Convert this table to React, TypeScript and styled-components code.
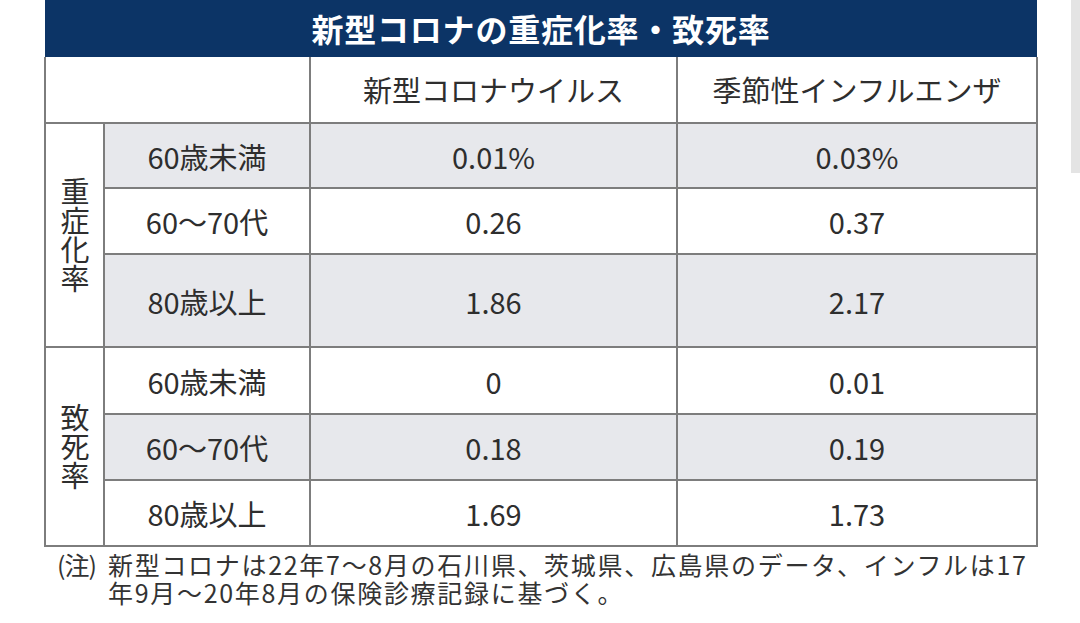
import { createGlobalStyle, styled } from 'styled-components';

const GlobalStyle = createGlobalStyle`
  body {
    margin: 0;
    background: #fff;
    font-family: "Noto Sans CJK JP", "Noto Sans", sans-serif;
    color: #2e2e2e;
  }
`;

const Page = styled.div`
  display: flex;
  align-items: flex-start;
  width: 1080px;
  height: 623px;
  overflow: hidden;
`;

const Figure = styled.div`
  margin-left: 44px;
  width: 992px;
`;

const Strip = styled.div`
  margin-left: auto;
  width: 9px;
  height: 173px;
  background: #e4e4e4;
`;

const Table = styled.table`
  width: 992px;
  border-collapse: collapse;
  table-layout: fixed;
`;

const TitleCell = styled.th`
  height: 55px;
  padding: 0 0 2px;
  background: #0c3466;
  color: #fff;
  font-size: 32px;
  font-weight: 700;
  letter-spacing: 0.8px;
  text-align: center;
  border: none;
`;

const Row = styled.tr<{ $h: number }>`
  height: ${(p) => p.$h}px;
`;

const Cell = styled.td<{ $shade?: boolean }>`
  padding: 0;
  border: 2px solid #7d7d7d;
  background: ${(p) => (p.$shade ? '#e7e8ec' : '#fff')};
  font-size: 29px;
  text-align: center;
  vertical-align: middle;
  white-space: nowrap;
`;

const HeadCell = styled(Cell)`
  border-top: none;
  padding-bottom: 2px;
`;

const GroupCell = styled(Cell)`
  writing-mode: vertical-rl;
  text-orientation: upright;
  line-height: 1;
  font-size: 29px;
`;

const Note = styled.div`
  display: flex;
  margin-top: 3px;
  padding-left: 13px;
  font-size: 25px;
  line-height: 28px;
  letter-spacing: 1.7px;
  color: #333;
  white-space: nowrap;
`;

const NoteLabel = styled.span`
  width: 51px;
  flex: none;
  letter-spacing: -1px;
`;

type DataRow = { age: string; covid: string; flu: string; shade: boolean; h: number };

const severe: DataRow[] = [
  { age: '60歳未満', covid: '0.01%', flu: '0.03%', shade: true, h: 65 },
  { age: '60～70代', covid: '0.26', flu: '0.37', shade: false, h: 66 },
  { age: '80歳以上', covid: '1.86', flu: '2.17', shade: true, h: 93 },
];

const fatal: DataRow[] = [
  { age: '60歳未満', covid: '0', flu: '0.01', shade: false, h: 67 },
  { age: '60～70代', covid: '0.18', flu: '0.19', shade: true, h: 66 },
  { age: '80歳以上', covid: '1.69', flu: '1.73', shade: false, h: 66 },
];

const Group = ({ label, rows }: { label: string; rows: DataRow[] }) => (
  <>
    {rows.map((r, i) => (
      <Row $h={r.h} key={r.age}>
        {i === 0 && <GroupCell rowSpan={rows.length}>{label}</GroupCell>}
        <Cell $shade={r.shade}>{r.age}</Cell>
        <Cell $shade={r.shade}>{r.covid}</Cell>
        <Cell $shade={r.shade}>{r.flu}</Cell>
      </Row>
    ))}
  </>
);

export default function App() {
  return (
    <>
      <GlobalStyle />
      <Page>
        <Figure>
          <Table>
            <colgroup>
              <col style={{ width: 59 }} />
              <col style={{ width: 206 }} />
              <col style={{ width: 367 }} />
              <col style={{ width: 360 }} />
            </colgroup>
            <thead>
              <tr>
                <TitleCell colSpan={4}>新型コロナの重症化率・致死率</TitleCell>
              </tr>
            </thead>
            <tbody>
              <Row $h={66}>
                <HeadCell colSpan={2} />
                <HeadCell>新型コロナウイルス</HeadCell>
                <HeadCell>季節性インフルエンザ</HeadCell>
              </Row>
              <Group label="重症化率" rows={severe} />
              <Group label="致死率" rows={fatal} />
            </tbody>
          </Table>
          <Note>
            <NoteLabel>(注)</NoteLabel>
            <span>
              新型コロナは22年7～8月の石川県、茨城県、広島県のデータ、インフルは17
              <br />
              年9月～20年8月の保険診療記録に基づく。
            </span>
          </Note>
        </Figure>
        <Strip />
      </Page>
    </>
  );
}
